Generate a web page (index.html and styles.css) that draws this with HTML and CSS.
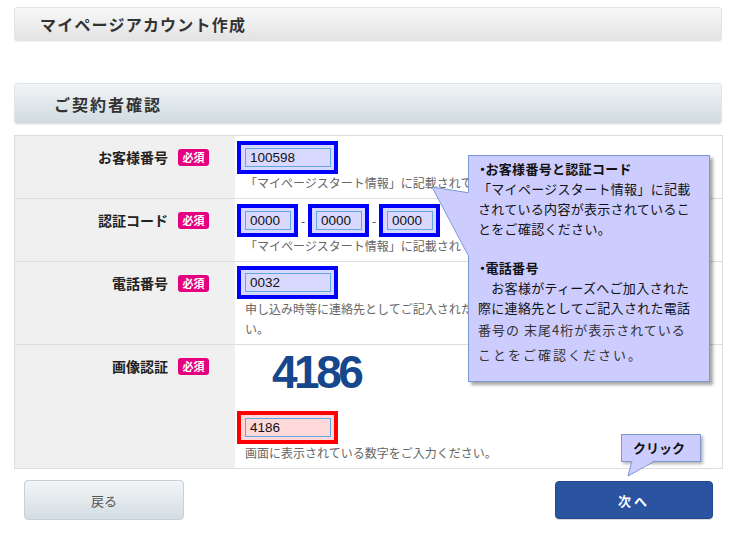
FILE: index.html
```html
<!DOCTYPE html>
<html lang="ja">
<head>
<meta charset="utf-8">
<title>マイページアカウント作成</title>
<link rel="stylesheet" href="styles.css">
</head>
<body>
<div class="page">
  <div class="head head-main"><h1>マイページアカウント作成</h1></div>
  <div class="head head-sub"><h2>ご契約者確認</h2></div>

  <div class="form">
    <div class="row">
      <div class="label"><span class="ltext">お客様番号</span><span class="req">必須</span></div>
      <div class="field">
        <div class="inputs"><span class="hl blue"><span class="inp w86">100598</span></span></div>
        <p class="help">「マイページスタート情報」に記載されているお客様番号をご入力ください。</p>
      </div>
    </div>
    <div class="row">
      <div class="label"><span class="ltext">認証コード</span><span class="req">必須</span></div>
      <div class="field">
        <div class="inputs">
          <span class="hl blue"><span class="inp w46">0000</span></span>
          <span class="dash">-</span>
          <span class="hl blue"><span class="inp w46">0000</span></span>
          <span class="dash">-</span>
          <span class="hl blue"><span class="inp w46">0000</span></span>
        </div>
        <p class="help">「マイページスタート情報」に記載されている認証コードをご入力ください。</p>
      </div>
    </div>
    <div class="row">
      <div class="label"><span class="ltext">電話番号</span><span class="req">必須</span></div>
      <div class="field f3">
        <div class="inputs"><span class="hl blue"><span class="inp w86">0032</span></span></div>
        <p class="help two">申し込み時等に連絡先としてご記入された電話番号の下4桁を入力してくださ<br>い。</p>
      </div>
    </div>
    <div class="row">
      <div class="label"><span class="ltext">画像認証</span><span class="req">必須</span></div>
      <div class="field f4">
        <div class="captcha">4186</div>
        <div class="inputs"><span class="hl red"><span class="inp w86">4186</span></span></div>
        <p class="help">画面に表示されている数字をご入力ください。</p>
      </div>
    </div>
  </div>

  <div class="buttons">
    <a class="btn back">戻る</a>
    <a class="btn next">次へ</a>
  </div>

  <div class="balloon info">
    <p class="bt"><span class="dot">・</span>お客様番号と認証コード</p>
    <p>「マイページスタート情報」に記載<br>されている内容が表示されているこ<br>とをご確認ください。</p>
    <p class="bt gap"><span class="dot">・</span>電話番号</p>
    <p>　お客様がティーズへご加入された<br>際に連絡先としてご記入された電話</p>
    <p class="l9">番号の 末尾4桁が表示されている</p>
    <p class="l10">ことをご確認ください。</p>
  </div>
  <svg class="tail tail-info" width="42" height="80" viewBox="0 0 42 80">
    <polygon points="2,4 40,10 40,75" fill="#ccccff"/>
    <polyline points="38,9.7 2,4 38,72" fill="none" stroke="#7a98d4" stroke-width="1"/>
  </svg>

  <div class="balloon click">クリック</div>
  <svg class="tail tail-click" width="36" height="22" viewBox="0 0 36 22">
    <polygon points="4,18 8,2 31,2" fill="#ccccff"/>
    <polyline points="8,3 4,18 31,3" fill="none" stroke="#7a98d4" stroke-width="1"/>
  </svg>
</div>
</body>
</html>
```

FILE: styles.css
```css
* {
  box-sizing: border-box;
  margin: 0;
  padding: 0;
}

body {
  margin: 0;
  background: #ffffff;
  font-family: "Noto Sans CJK JP", "Noto Sans", sans-serif;
  color: #222222;
}

.page {
  position: relative;
  width: 738px;
  height: 534px;
  padding: 7px 15px 0 14px;
}

.head {
  display: flex;
  align-items: center;
  width: 708px;
  border: 1px solid #e3e3e3;
  border-radius: 3px;
  box-shadow: 0 1px 1px rgba(0, 0, 0, 0.06);
}

.head-main {
  height: 34px;
  padding-left: 25px;
  background: linear-gradient(#f8f8f8, #e3e3e3);
}

.head-main h1 {
  font-size: 16px;
  line-height: 20px;
  font-weight: bold;
  letter-spacing: 1.2px;
  color: #333333;
}

.head-sub {
  margin-top: 42px;
  height: 41px;
  padding-left: 39px;
  background: linear-gradient(#f1f4f6, #d0dbe1);
}

.head-sub h2 {
  font-size: 16px;
  line-height: 20px;
  font-weight: bold;
  letter-spacing: 2px;
  color: #333333;
}

.form {
  margin-top: 11px;
  width: 709px;
  border: 1px solid #dddddd;
}

.row {
  display: grid;
  grid-template-columns: 220px 1fr;
  border-top: 1px solid #dddddd;
}

.row:first-child {
  border-top: none;
}

.label {
  display: flex;
  justify-content: flex-end;
  align-items: flex-start;
  padding: 11px 26px 0 0;
  background: #f0f0f0;
}

.ltext {
  font-size: 14px;
  line-height: 20px;
  font-weight: bold;
  color: #222222;
}

.req {
  margin-left: 10px;
  margin-top: 2px;
  width: 31px;
  height: 17px;
  border-radius: 3px;
  background: #e4007f;
  color: #ffffff;
  font-size: 11px;
  line-height: 17px;
  font-weight: bold;
  text-align: center;
}

.field {
  padding: 5px 10px 6px 2px;
}

.f3 {
  padding-top: 4px;
  padding-bottom: 5px;
}

.f4 {
  padding-top: 4px;
}

.inputs {
  display: flex;
  align-items: center;
}

.hl {
  display: inline-block;
  border: 4px solid #0000ff;
  padding: 3px 3px 3px 4px;
  background: #d9d9ff;
}

.hl.red {
  border-color: #ff0000;
  background: #ffd9d9;
}

.inp {
  display: block;
  height: 19px;
  border: 1px solid #5fa6e6;
  padding-left: 4px;
  font-family: "Liberation Sans", Arial, sans-serif;
  font-size: 13.5px;
  line-height: 17px;
  color: #111111;
}

.w86 {
  width: 86px;
}

.w46 {
  width: 46px;
}

.dash {
  margin: 0 3px;
  font-size: 12px;
  color: #444444;
  width: 4px;
  text-align: center;
}

.help {
  margin-left: 8px;
  font-size: 12px;
  line-height: 18px;
  color: #666666;
  white-space: nowrap;
}

.help.two {
  line-height: 20px;
}

.captcha {
  margin-left: 35px;
  font-family: "Liberation Sans", Arial, sans-serif;
  font-size: 46px;
  line-height: 46px;
  font-weight: bold;
  letter-spacing: -3.5px;
  color: #16468c;
  margin-bottom: 16px;
}

.buttons {
  display: flex;
  justify-content: space-between;
  align-items: center;
  width: 709px;
  margin-top: 11px;
  padding: 0 10px;
}

.btn {
  display: flex;
  align-items: center;
  justify-content: center;
  border-radius: 4px;
  font-size: 13px;
}

.back {
  width: 160px;
  height: 40px;
  border: 1px solid #c7d0d6;
  background: linear-gradient(#f3f5f7, #d3dde3);
  color: #555555;
}

.next {
  width: 158px;
  height: 38px;
  border: 1px solid #24488f;
  background: #2b54a0;
  color: #ffffff;
  font-weight: bold;
  letter-spacing: 3px;
  box-shadow: 0 1px 1px rgba(0, 0, 0, 0.15);
}

.balloon {
  position: absolute;
  background: #ccccff;
  border: 1px solid #7a98d4;
  box-shadow: 3px 3px 3px rgba(0, 0, 0, 0.35);
  color: #111111;
}

.info {
  left: 468px;
  top: 155px;
  width: 242px;
  height: 227px;
  padding: 3px 0 0 9px;
  font-size: 13px;
  line-height: 20px;
  letter-spacing: 0.3px;
  white-space: nowrap;
}

.bt {
  font-weight: bold;
}

.dot {
  letter-spacing: -3.5px;
  margin-left: -2px;
}

.gap {
  margin-top: 19px;
}

.l9 {
  margin-top: 1px;
  line-height: 22px;
  letter-spacing: 1px;
  color: #333333;
}

.l10 {
  margin-top: 3px;
  line-height: 22px;
  letter-spacing: 2px;
  color: #333333;
}

.click {
  left: 621px;
  top: 434px;
  width: 80px;
  height: 28px;
  padding-left: 11px;
  font-size: 13px;
  line-height: 26px;
  font-weight: bold;
  box-shadow: 2px 2px 3px rgba(0, 0, 0, 0.3);
}

.tail {
  position: absolute;
  overflow: visible;
}

.tail-info {
  left: 430px;
  top: 183px;
}

.tail-click {
  left: 624px;
  top: 458px;
}
```
